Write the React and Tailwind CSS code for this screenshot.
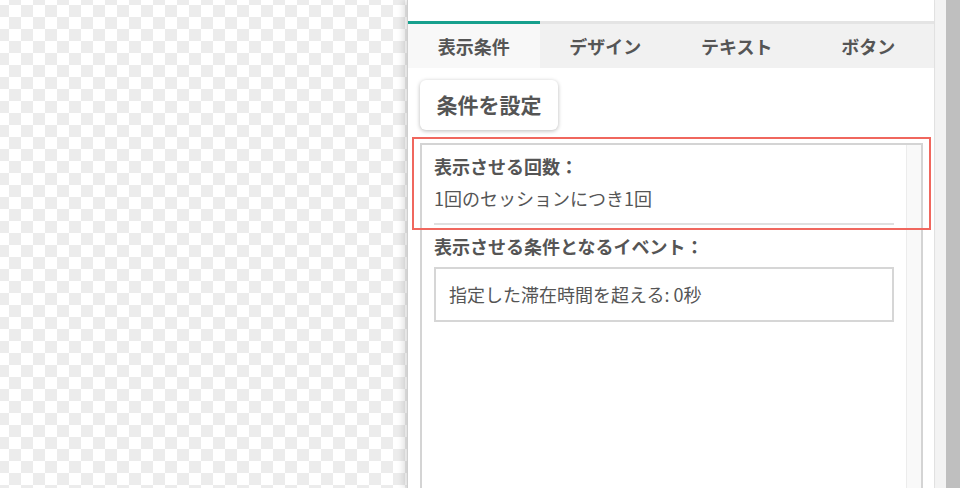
export default function App() {
  const tabs = ['表示条件', 'デザイン', 'テキスト', 'ボタン'];

  return (
    <div className="flex h-[488px] w-[960px] overflow-hidden font-['Noto_Sans_CJK_JP','Noto_Sans',sans-serif] text-[#555]">
      {/* transparent canvas */}
      <div className="w-[407px] shrink-0 bg-[conic-gradient(#ececec_25%,#fff_0_50%,#ececec_0_75%,#fff_0)] bg-[length:24px_24px] bg-[position:-3px_-7px]" />

      {/* settings panel */}
      <div className="relative z-10 flex w-[527px] shrink-0 flex-col border-l border-[#cfcfcf] bg-white shadow-[-4px_0_6px_rgba(0,0,0,0.12)]">
        <div className="h-[21px] shrink-0" />

        <div className="flex h-[47px] shrink-0 bg-[#f1f1f1]">
          {tabs.map((t, i) => (
            <div
              key={t}
              className={
                i === 0
                  ? 'flex flex-1 items-center justify-center border-t-[3px] border-[#17a08e] bg-[#f8f8f8] text-[18px] font-bold'
                  : 'flex flex-1 items-center justify-center border-t-[3px] border-[#e4e4e4] text-[18px] font-bold'
              }
            >
              {t}
            </div>
          ))}
        </div>

        <div className="flex min-h-0 flex-1 flex-col pl-[12px] pr-[11px] pt-[12px]">
          <button className="flex h-[50px] w-[138px] shrink-0 items-center justify-center rounded-[6px] bg-white text-[21px] font-bold text-[#555] shadow-[0_1px_4px_rgba(0,0,0,0.28)]">
            条件を設定
          </button>

          <div className="mt-[13px] flex min-h-0 flex-1 border-2 border-b-0 border-[#d4d4d4]">
            <div className="flex-1 pl-[12px] pr-[12px] pt-[9px]">
              <div className="text-[18px] font-bold leading-[24px]">表示させる回数：</div>
              <div className="mt-[8px] text-[18px] leading-[24px]">1回のセッションにつき1回</div>
              <div className="mt-[13px] h-[2px] bg-[#e0e0e0]" />
              <div className="mt-[9px] text-[18px] font-bold leading-[24px]">表示させる条件となるイベント：</div>
              <div className="mt-[9px] flex h-[55px] items-center border-2 border-[#d6d6d6] px-[13px] text-[18px]">
                指定した滞在時間を超える: 0秒
              </div>
            </div>
            <div className="w-[15px] shrink-0 border-l border-[#ececec] bg-[#f9f9f9]" />
          </div>
        </div>

        {/* highlight annotation */}
        <div className="pointer-events-none absolute left-[4px] top-[137px] h-[93px] w-[519px] border-2 border-[#f0675e]" />
      </div>

      <div className="w-[12px] shrink-0 border-l border-[#e3e3e3] bg-[#f3f3f3]" />
      <div className="flex-1 bg-[#bfbfbf]" />
    </div>
  );
}
